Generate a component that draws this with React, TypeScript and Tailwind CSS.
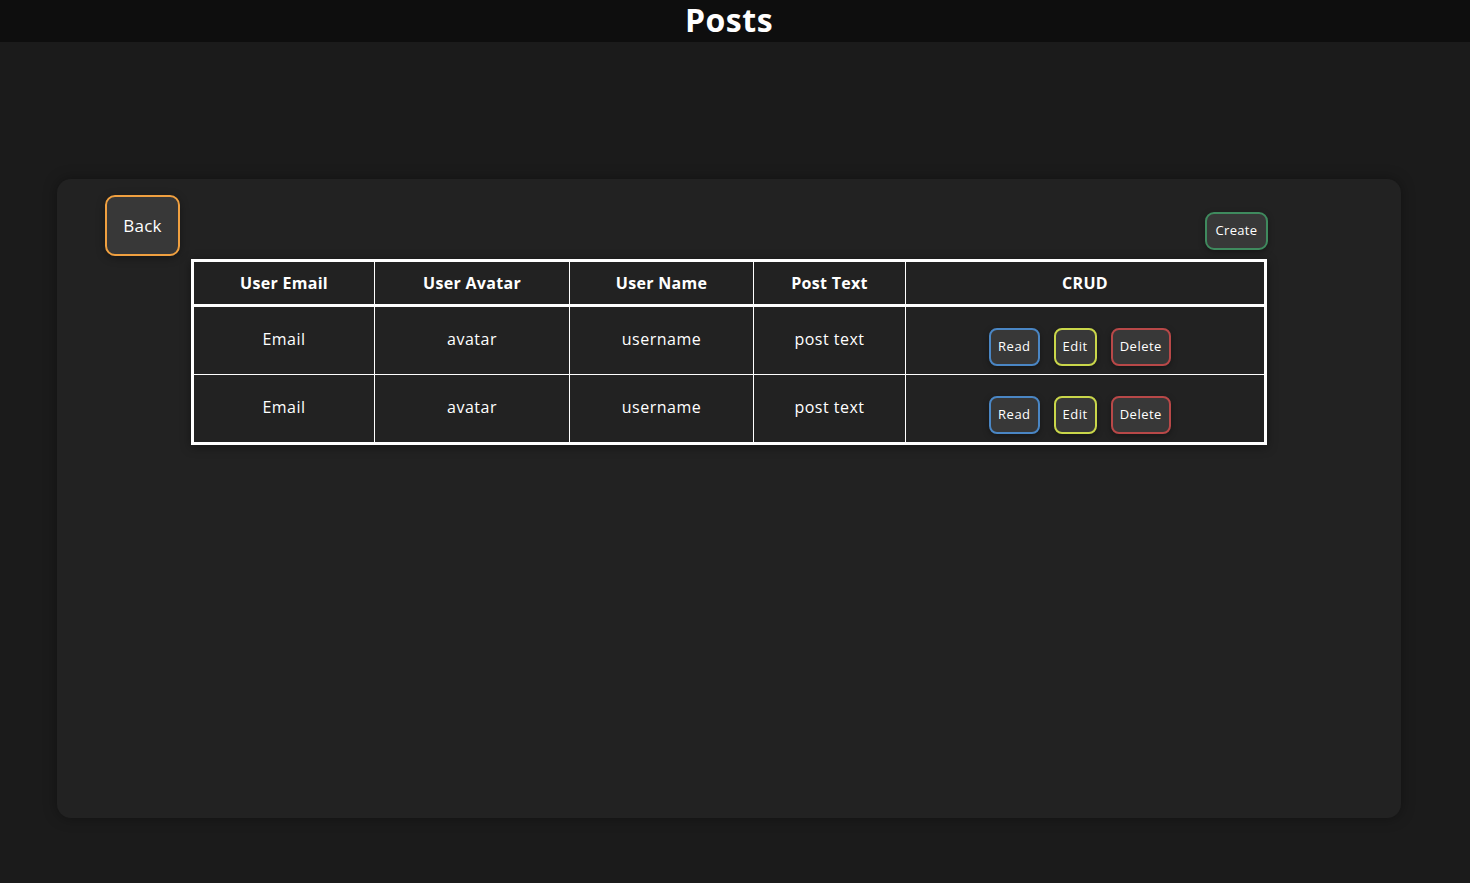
import React from 'react'

const rows = [
  { email: 'Email', avatar: 'avatar', name: 'username', text: 'post text' },
  { email: 'Email', avatar: 'avatar', name: 'username', text: 'post text' },
]

const cols = [
  { label: 'User Email', w: 'w-[182px]' },
  { label: 'User Avatar', w: 'w-[195px]' },
  { label: 'User Name', w: 'w-[184px]' },
  { label: 'Post Text', w: 'w-[152px]' },
  { label: 'CRUD', w: '' },
]

function Btn({ label, border }: { label: string; border: string }) {
  return (
    <button
      className={`h-[38px] px-[7px] rounded-[8px] border-2 ${border} bg-[#383838] text-[13px] text-white shadow-[0_2px_6px_rgba(0,0,0,0.35)]`}
    >
      {label}
    </button>
  )
}

export default function App() {
  return (
    <div className="min-h-[883px] bg-[#1b1b1b] text-white font-['Open_Sans',sans-serif]">
      <header className="h-[42px] bg-[#0e0e0e] flex items-center">
        <div className="w-[1458px] flex justify-center">
          <h1 className="text-[32px] font-bold leading-[38px] tracking-[0.5px] -mt-[3px]">Posts</h1>
        </div>
      </header>

      <main className="pt-[137px] pl-[57px] pb-[65px]">
        <section className="w-[1344px] h-[639px] rounded-[14px] bg-[#222222] shadow-[0_0_14px_rgba(0,0,0,0.35)] pt-4">
          <div className="flex items-end justify-between pl-12 pr-[133px]">
            <button className="w-[75px] h-[61px] rounded-[10px] border-2 border-[#f0a040] bg-[#383838] text-[17px] tracking-[0.3px] shadow-[0_2px_8px_rgba(0,0,0,0.35)]">
              Back
            </button>
            <div className="mb-[6px]">
              <button className="w-[63px] h-[38px] rounded-[9px] border-2 border-[#3f8a5e] bg-[#383838] text-[13px] tracking-[0.3px] shadow-[0_2px_6px_rgba(0,0,0,0.35)]">
                Create
              </button>
            </div>
          </div>

          <table className="mx-auto mt-[3px] w-[1076px] border-[3px] border-white border-collapse shadow-[0_2px_10px_rgba(0,0,0,0.4)]">
            <thead>
              <tr className="h-[45px] border-b-[3px] border-white">
                {cols.map((c) => (
                  <th key={c.label} className={`${c.w} border-x border-white text-[16px] font-bold tracking-[0.3px] text-center`}>
                    {c.label}
                  </th>
                ))}
              </tr>
            </thead>
            <tbody className="text-[16px] tracking-[0.5px]">
              {rows.map((r, i) => (
                <tr key={i} className="h-[69px] border-b border-white">
                  <td className="border-x border-white text-center pb-[3px]">{r.email}</td>
                  <td className="border-x border-white text-center pb-[3px]">{r.avatar}</td>
                  <td className="border-x border-white text-center pb-[3px]">{r.name}</td>
                  <td className="border-x border-white text-center pb-[3px]">{r.text}</td>
                  <td className="border-x border-white">
                    <div className="flex justify-center gap-[14px] pt-[12px] pr-[10px]">
                      <Btn label="Read" border="border-[#4a86c4]" />
                      <Btn label="Edit" border="border-[#c9d64a]" />
                      <Btn label="Delete" border="border-[#b84848]" />
                    </div>
                  </td>
                </tr>
              ))}
            </tbody>
          </table>
        </section>
      </main>
    </div>
  )
}
